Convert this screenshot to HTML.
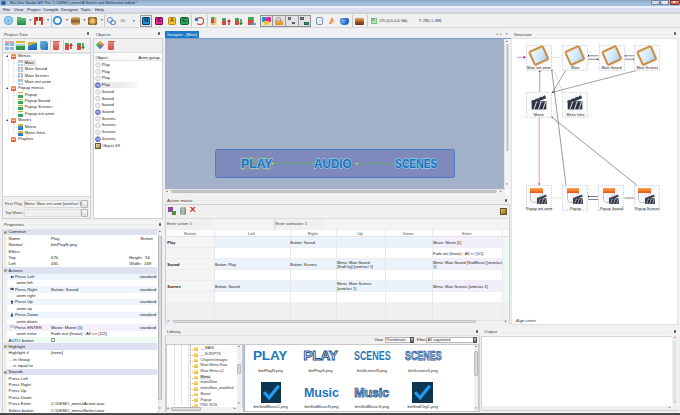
<!DOCTYPE html>
<html><head><meta charset="utf-8">
<style>
*{box-sizing:border-box;margin:0;padding:0}
html,body{width:680px;height:415px;overflow:hidden;background:#eef0f4}
body{position:relative;font-family:"Liberation Sans",sans-serif;font-size:4px;color:#222;line-height:1}
.a{position:absolute}
.t{position:absolute;white-space:nowrap;line-height:1;}
.ptitle{position:absolute;height:8px;background:#f3f3f3}
.ptitle span{position:absolute;left:3px;top:2.5px;font-size:4.4px;color:#3a3a3a}
.ptitle i{position:absolute;top:3.8px;height:1.2px;background:linear-gradient(#e4e4e4,#efefef)}
.pin{position:absolute;width:2px;height:3.2px;top:2.3px;background:#555;border-radius:1px}
.frame{position:absolute;border:0.6px solid #d0d0d0;background:#fff}
.tb{position:absolute;background:#f0f0f0;border-bottom:0.6px solid #dadada}
.ic{position:absolute;width:8.5px;height:8.5px;border-radius:1px}
</style></head><body>

<!-- title bar -->
<div class="a" style="left:0;top:0;width:680px;height:6px;background:linear-gradient(#86a0c0,#98b6d2 25%,#aac5de)"></div>
<div class="a" style="left:0;top:5.8px;width:680px;height:1.9px;background:linear-gradient(#e4eefa,#eef4fc)"></div>
<div class="a" style="left:1px;top:0.6px;width:5px;height:4.8px;border-radius:50%;background:#2f5f9e"></div>
<div class="t" style="left:10px;top:0.9px;font-size:4.3px;color:#263246;transform:scaleX(0.9);transform-origin:0 0">Blu-Disc Studio MX Pro: C:\DEMO_menu\A  Switch and Multiaction.bdmd *</div>
<div class="a" style="left:651.3px;top:0.3px;width:8.6px;height:4.8px;background:linear-gradient(#dfe7f1,#aebfd4);border:0.5px solid #6f84a0;border-radius:0 0 0 1.5px"></div>
<div class="a" style="left:653.8px;top:3px;width:3.6px;height:0.8px;background:#f4f6fa"></div>
<div class="a" style="left:660.3px;top:0.3px;width:9px;height:4.8px;background:linear-gradient(#dfe7f1,#aebfd4);border:0.5px solid #6f84a0"></div>
<div class="a" style="left:662.8px;top:1.3px;width:4px;height:2.6px;border:0.6px solid #f4f6fa;border-top-width:0.9px"></div>
<div class="a" style="left:669.7px;top:0.3px;width:10.3px;height:4.8px;background:linear-gradient(#eba89e,#c9473a);border:0.5px solid #7a2e26;border-radius:0 0 1.5px 0"></div>
<div class="t" style="left:672.8px;top:0.1px;font-size:5px;font-weight:bold;color:#fff">&#215;</div>

<!-- menu bar -->
<div class="a" style="left:0;top:7.7px;width:680px;height:4.6px;background:#dcdff1"></div>
<div class="a" style="left:0;top:12.2px;width:680px;height:1.5px;background:linear-gradient(#d2d8e0,#c9d0d4)"></div>
<div class="t" style="left:3px;top:8.1px;font-size:4.3px;color:#1a1a1a;word-spacing:4px">File</div>
<div class="t" style="left:14px;top:8.1px;font-size:4.3px;color:#1a1a1a">View</div>
<div class="t" style="left:27px;top:8.1px;font-size:4.3px;color:#1a1a1a">Project</div>
<div class="t" style="left:43px;top:8.1px;font-size:4.3px;color:#1a1a1a">Compile</div>
<div class="t" style="left:61px;top:8.1px;font-size:4.3px;color:#1a1a1a">Designer</div>
<div class="t" style="left:80.5px;top:8.1px;font-size:4.3px;color:#1a1a1a">Tools</div>
<div class="t" style="left:95px;top:8.1px;font-size:4.3px;color:#1a1a1a">Help</div>

<!-- toolbar -->
<div class="a" style="left:0;top:13.7px;width:680px;height:14.6px;background:#f0f0f0;border-bottom:0.6px solid #d8d8d8"></div>

<div class="a" style="left:3.8px;top:16.2px;width:8.8px;height:8.8px;border-radius:50%;background:radial-gradient(circle at 50% 50%,#5aa8d8 0,#9fd4ef 30%,#7cc2e6 55%,#3f95cc 80%,#9fd0ea 100%)"></div>
<div class="a" style="left:17px;top:17.5px;width:8.8px;height:7px;background:linear-gradient(#61c07a,#1f8a45);border-radius:0.8px"></div>
<div class="a" style="left:17px;top:16.5px;width:4px;height:1.5px;background:#4fae68;border-radius:0.5px"></div>
<div class="t" style="left:28.8px;top:19px;font-size:3px;color:#333">&#9660;</div>
<div class="a" style="left:34px;top:16.5px;width:9px;height:8.6px;background:linear-gradient(90deg,#c8453a 0,#c8453a 18%,#f6eadb 18%,#f6eadb 82%,#c8453a 82%);border-radius:0.8px"></div>
<div class="a" style="left:36.2px;top:16.5px;width:1.4px;height:4px;background:#b8322a"></div><div class="a" style="left:39.4px;top:16.5px;width:1.4px;height:4px;background:#b8322a"></div>
<div class="t" style="left:46.5px;top:19px;font-size:3px;color:#333">&#9660;</div>
<div class="a" style="left:50.5px;top:15px;width:0.6px;height:12px;background:#c9c9c9"></div>
<div class="a" style="left:53px;top:16.3px;width:9px;height:9px;border-radius:50%;background:radial-gradient(circle,#f4f9fd 0,#f4f9fd 35%,#3f95d8 50%,#2a7fc8 68%,#cfe6f6 100%)"></div>
<div class="t" style="left:65.5px;top:19px;font-size:3px;color:#333">&#9660;</div>
<div class="a" style="left:70.5px;top:17px;width:9.5px;height:7.6px;background:linear-gradient(#e2b96a,#8a5d2b 50%,#d9b070);border-radius:2px"></div>
<div class="t" style="left:83px;top:19px;font-size:3px;color:#333">&#9660;</div>
<div class="a" style="left:88px;top:16.5px;width:9px;height:8.6px;background:radial-gradient(circle,#f0d08a 0,#d8a94f 40%,#7a5a25 75%,#3d8b3a 100%);border-radius:1.5px"></div>
<div class="t" style="left:100.2px;top:19px;font-size:3px;color:#333">&#9660;</div>
<div class="a" style="left:103.6px;top:15px;width:0.6px;height:12px;background:#c9c9c9"></div>
<div class="a" style="left:107px;top:17px;width:5.5px;height:5.5px;border-radius:50%;border:1.2px solid #5b7fc9"></div>
<div class="a" style="left:110px;top:19.5px;width:5.5px;height:5.5px;border-radius:50%;border:1.2px solid #4a6fb8"></div>
<div class="t" style="left:120.5px;top:19px;font-size:4px;color:#555">50</div>
<div class="t" style="left:132.2px;top:19.5px;font-size:3px;color:#333">&#9660;</div>
<div class="a" style="left:139.8px;top:14.8px;width:12.6px;height:12.5px;background:#e6e6e6;border:0.7px solid #9a9a9a"></div>
<div class="a" style="left:142.4px;top:17px;width:8px;height:8px;background:#1d8fd6;border:0.6px solid #0b3f74;border-radius:1px"></div>
<div class="t" style="left:144.3px;top:18.3px;font-size:5.5px;font-weight:bold;color:#0c2f63">N</div>
<div class="a" style="left:155px;top:17px;width:8px;height:8px;background:#e2278a;border:0.6px solid #8a1150;border-radius:1px"></div>
<div class="t" style="left:157.2px;top:18.3px;font-size:5.5px;font-weight:bold;color:#6a0a3c">S</div>
<div class="a" style="left:167.7px;top:17px;width:8.2px;height:8px;background:#f3c632;border:0.6px solid #b38a10;border-radius:1.5px"></div>
<div class="t" style="left:170px;top:18.3px;font-size:5.2px;font-weight:bold;color:#5a4200">A</div>
<div class="a" style="left:180.2px;top:17px;width:8.4px;height:8px;background:#2aa45c;border:0.6px solid #14633a;border-radius:1.5px"></div>
<div class="t" style="left:182.6px;top:18.3px;font-size:5.2px;font-weight:bold;color:#0c4a28">C</div>
<div class="a" style="left:191px;top:15px;width:0.6px;height:12px;background:#c9c9c9"></div>
<div class="a" style="left:195.5px;top:17px;width:8px;height:8px;border-radius:50%;border:1.6px solid #c3352f;border-left-color:transparent;border-bottom-color:#c3352f"></div>
<div class="a" style="left:194.5px;top:17.8px;width:3px;height:3px;background:#2e6fbf;transform:rotate(20deg)"></div>
<div class="a" style="left:207px;top:15px;width:0.6px;height:12px;background:#c9c9c9"></div>
<div class="a" style="left:210.5px;top:16.5px;width:5.5px;height:8.6px;background:linear-gradient(#3fa35a 0,#3fa35a 30%,#d9483f 30%,#d9483f 70%,#e9b23c 70%);border-radius:1px"></div>
<div class="a" style="left:214px;top:16.5px;width:3.3px;height:8.6px;background:#f2d7a0;opacity:.7"></div>
<div class="a" style="left:222.3px;top:17.5px;width:4px;height:7.5px;background:linear-gradient(#3fa35a 0,#3fa35a 40%,#d9483f 40%);border-radius:0.5px"></div>
<svg class="a" style="left:226.8px;top:18.5px" width="4" height="6.5" viewBox="0 0 4 6.5"><path d="M2 0 L4 2.8 L2.7 2.8 L2.7 6.5 L1.3 6.5 L1.3 2.8 L0 2.8 Z" fill="#d0202a"/></svg>
<div class="a" style="left:234.5px;top:17.5px;width:4px;height:7.5px;background:linear-gradient(#3fa35a 0,#3fa35a 40%,#d9483f 40%);border-radius:0.5px"></div>
<svg class="a" style="left:239px;top:18.8px" width="4" height="6.5" viewBox="0 0 4 6.5"><path d="M2 6.5 L4 3.7 L2.7 3.7 L2.7 0 L1.3 0 L1.3 3.7 L0 3.7 Z" fill="#1c8a2e"/></svg>
<div class="a" style="left:248.3px;top:17px;width:4.5px;height:8px;background:linear-gradient(#3fa35a 0,#3fa35a 40%,#d9483f 40%);border-radius:0.5px"></div>
<div class="a" style="left:253px;top:16.5px;width:1.3px;height:8.6px;background:#5aa0d8"></div>
<div class="a" style="left:252px;top:23px;width:4px;height:2px;background:#5aa0d8"></div>
<div class="a" style="left:260px;top:14.8px;width:50.8px;height:12.5px;background:#e2e2e2;border:0.7px solid #8f8f8f"></div>
<div class="a" style="left:272.4px;top:15px;width:0.6px;height:12px;background:#9a9a9a"></div>
<div class="a" style="left:285px;top:15px;width:0.6px;height:12px;background:#9a9a9a"></div>
<div class="a" style="left:297.6px;top:15px;width:0.6px;height:12px;background:#9a9a9a"></div>
<div class="a" style="left:261.8px;top:17px;width:4.5px;height:4.5px;background:#1d8fd6;border-radius:1px"></div>
<div class="a" style="left:266.3px;top:17px;width:4.5px;height:4.5px;background:#e2278a;border-radius:1px"></div>
<div class="a" style="left:263.8px;top:21px;width:5px;height:4px;background:#f3c632;border-radius:1px"></div>
<div class="a" style="left:275px;top:19.8px;width:7.5px;height:5.5px;background:linear-gradient(#f6b44c,#e08a1e);border-radius:1px"></div>
<div class="a" style="left:276.3px;top:16.5px;width:5px;height:5px;border:1px solid #9aa0a0;border-bottom:none;border-radius:2.5px 2.5px 0 0"></div>
<div class="a" style="left:287.5px;top:17px;width:3.5px;height:2.5px;background:#8aa;border:0.4px solid #566"></div>
<div class="a" style="left:291.5px;top:21.5px;width:3.5px;height:2.5px;background:#b98aa8;border:0.4px solid #656"></div>
<div class="a" style="left:300px;top:17px;width:3.5px;height:2.5px;background:#889;border:0.4px solid #556"></div>
<div class="a" style="left:304px;top:21.5px;width:4.5px;height:3px;background:#2f9a3f;border:0.4px solid #265"></div>
<div class="a" style="left:315.5px;top:17px;width:7.5px;height:8px;border:0.8px solid #6e96cf;border-radius:2px;background:linear-gradient(135deg,transparent 45%,#d9534f 50%,transparent 55%)"></div>
<div class="a" style="left:328.8px;top:17px;width:0;height:0;border-left:3.8px solid transparent;border-right:3.8px solid transparent;border-bottom:7.5px solid #f08a3c"></div>
<div class="a" style="left:330.6px;top:20.5px;width:0;height:0;border-left:2px solid transparent;border-right:2px solid transparent;border-bottom:3.2px solid #f4f4f4"></div>
<div class="a" style="left:340px;top:17.5px;width:8.6px;height:7px;background:radial-gradient(circle at 30% 40%,#7cb6ef 0,#1f66c8 60%);border-radius:2px 2px 4px 4px"></div>
<div class="a" style="left:351.5px;top:15px;width:0.6px;height:12px;background:#c9c9c9"></div>
<div class="a" style="left:354.5px;top:17.5px;width:9px;height:7.5px;background:linear-gradient(#e6a85e,#9b4f22 60%,#6b3416);border-radius:1px"></div>
<div class="a" style="left:366.8px;top:15px;width:0.6px;height:12px;background:#c9c9c9"></div>
<div class="a" style="left:370.6px;top:18.3px;width:6px;height:6px;background:#b7eab5;border:0.5px solid #7cc47a"></div>
<div class="t" style="left:372.1px;top:19.8px;font-size:2.6px;color:#2d6a2d">BL</div>
<div class="t" style="left:379.6px;top:19.3px;font-size:3.9px;color:#222">2% (0,5-0,5 Gb)</div>
<div class="t" style="left:418.8px;top:19.3px;font-size:3.9px;color:#222">T: 290, L:396</div>


<!-- main background between panels -->

<!-- ===== Project tree panel ===== -->
<div class="ptitle" style="left:1px;top:30px;width:90px"><span>Project Tree</span><i style="left:31px;width:52px"></i><b class="pin" style="left:85.8px"></b></div>
<div class="frame" style="left:2px;top:38px;width:88.8px;height:181px;background:#f0f0f0"></div>
<div class="a" style="left:2.6px;top:52.25px;width:87.6px;height:0.6px;background:#dcdcdc"></div>
<div class="a" style="left:3px;top:52.85px;width:87px;height:144.6px;background:#fff;border-top:0.5px solid #e3e3e3;border-bottom:0.5px solid #d6d6d6"></div>

<div class="a" style="left:5px;top:41.00px;width:8.6px;height:8.7px;background:linear-gradient(#e8a8a0 0,#e8a8a0 20%,#f5f5f5 20%,#f5f5f5 26%,#86b8e6 26%,#86b8e6 58%,#f5f5f5 58%,#f5f5f5 64%,#86b8e6 64%);border-radius:0.5px"></div>
<div class="a" style="left:8.9px;top:43.00px;width:0.8px;height:6.7px;background:#f5f5f5"></div>
<div class="a" style="left:16.3px;top:41.00px;width:8.6px;height:8.7px;background:linear-gradient(#d9b440 0,#d9b440 25%,#f0f0e0 25%,#f0f0e0 35%,#9fd8c8 35%,#9fd8c8 60%,#2c9a4a 60%);border-radius:0.5px"></div>
<div class="a" style="left:28px;top:42.00px;width:8.6px;height:7.6px;background:linear-gradient(160deg,#c9b040 0,#c9b040 35%,#2f7fd0 38%,#1f5fb0);border-radius:0.5px"></div>
<div class="a" style="left:39.8px;top:41.00px;width:8.2px;height:8.8px;background:linear-gradient(135deg,#6fb6e4,#1f6fb0);border-radius:1px 3px 1px 3px"></div>
<div class="a" style="left:50.3px;top:40.00px;width:0.6px;height:11px;background:#d0d0d0"></div>
<div class="a" style="left:53.3px;top:42.30px;width:6px;height:7.4px;background:linear-gradient(#e58a82,#d04a3f);border-radius:0 0 1.5px 1.5px"></div>
<div class="a" style="left:52.8px;top:41.30px;width:7px;height:1.2px;background:#d55a50;border-radius:0.5px"></div>
<div class="a" style="left:62.8px;top:40.00px;width:0.6px;height:11px;background:#d0d0d0"></div>
<div class="a" style="left:65px;top:42.50px;width:4px;height:7.2px;background:linear-gradient(#3fa35a 0,#3fa35a 35%,#d9483f 35%);border-radius:0.5px"></div>
<svg class="a" style="left:69.3px;top:42.8px" width="4" height="6.5" viewBox="0 0 4 6.5"><path d="M2 0 L4 2.8 L2.7 2.8 L2.7 6.5 L1.3 6.5 L1.3 2.8 L0 2.8 Z" fill="#d0202a"/></svg>
<div class="a" style="left:76.5px;top:42.50px;width:4px;height:7.2px;background:linear-gradient(#3fa35a 0,#3fa35a 35%,#d9483f 35%);border-radius:0.5px"></div>
<svg class="a" style="left:80.8px;top:43.2px" width="4" height="6.5" viewBox="0 0 4 6.5"><path d="M2 6.5 L4 3.7 L2.7 3.7 L2.7 0 L1.3 0 L1.3 3.7 L0 3.7 Z" fill="#1c8a2e"/></svg>
<div class="a" style="left:13.3px;top:59.25px;width:0;height:22.5px;border-left:0.5px dotted #dedede"></div>
<div class="a" style="left:13.3px;top:91.25px;width:0;height:22.5px;border-left:0.5px dotted #dedede"></div>
<div class="a" style="left:13.3px;top:123.25px;width:0;height:9.5px;border-left:0.5px dotted #dedede"></div>
<div class="a" style="left:7.5px;top:59.25px;width:0;height:80px;border-left:0.5px dotted #e4e4e4"></div>
<div class="a" style="left:5.8px;top:55.25px;width:0;height:0;border-left:2.6px solid transparent;border-bottom:2.6px solid #3a3a3a"></div>
<div class="a" style="left:11px;top:54.45px;width:5.3px;height:4.4px;background:linear-gradient(#f29a6a,#df5a2a);border-radius:0.7px"></div>
<div class="a" style="left:12px;top:56.05px;width:3.3px;height:0.8px;background:#fbd2b8"></div>
<div class="t" style="left:18px;top:54.45px;font-size:4.2px;color:#262626">Menus</div>
<div class="a" style="left:13.6px;top:63.03px;width:3.8px;height:0;border-top:0.5px dotted #dedede"></div>
<div class="a" style="left:17.7px;top:60.33px;width:5.6px;height:5.4px;background:linear-gradient(#f0a6a0 0,#f0a6a0 18%,#fff 18%,#fff 24%,#9cc8ec 24%,#9cc8ec 55%,#fff 55%,#fff 62%,#9cc8ec 62%)"></div>
<div class="a" style="left:20.2px;top:61.53px;width:0.6px;height:4.2px;background:#fff"></div>
<div class="a" style="left:24px;top:60.15px;width:11.5px;height:5.8px;background:#ececec;border:0.4px solid #dcdcdc"></div><div class="t" style="left:24.8px;top:60.83px;font-size:4.2px;color:#111;font-weight:normal">Main</div>
<div class="a" style="left:13.6px;top:69.41px;width:3.8px;height:0;border-top:0.5px dotted #dedede"></div>
<div class="a" style="left:17.7px;top:66.71px;width:5.6px;height:5.4px;background:linear-gradient(#f0a6a0 0,#f0a6a0 18%,#fff 18%,#fff 24%,#9cc8ec 24%,#9cc8ec 55%,#fff 55%,#fff 62%,#9cc8ec 62%)"></div>
<div class="a" style="left:20.2px;top:67.91px;width:0.6px;height:4.2px;background:#fff"></div>
<div class="t" style="left:24.8px;top:67.21px;font-size:4.2px;color:#262626;font-weight:normal">Main Sound</div>
<div class="a" style="left:13.6px;top:75.79px;width:3.8px;height:0;border-top:0.5px dotted #dedede"></div>
<div class="a" style="left:17.7px;top:73.09px;width:5.6px;height:5.4px;background:linear-gradient(#f0a6a0 0,#f0a6a0 18%,#fff 18%,#fff 24%,#9cc8ec 24%,#9cc8ec 55%,#fff 55%,#fff 62%,#9cc8ec 62%)"></div>
<div class="a" style="left:20.2px;top:74.29px;width:0.6px;height:4.2px;background:#fff"></div>
<div class="t" style="left:24.8px;top:73.59px;font-size:4.2px;color:#262626;font-weight:normal">Main Scenes</div>
<div class="a" style="left:13.6px;top:82.17px;width:3.8px;height:0;border-top:0.5px dotted #dedede"></div>
<div class="a" style="left:17.7px;top:79.47px;width:5.6px;height:5.4px;background:linear-gradient(#f0a6a0 0,#f0a6a0 18%,#fff 18%,#fff 24%,#9cc8ec 24%,#9cc8ec 55%,#fff 55%,#fff 62%,#9cc8ec 62%)"></div>
<div class="a" style="left:20.2px;top:80.67px;width:0.6px;height:4.2px;background:#fff"></div>
<div class="t" style="left:24.8px;top:79.97px;font-size:4.2px;color:#262626;font-weight:normal">Main ent anim</div>
<div class="a" style="left:5.8px;top:87.15px;width:0;height:0;border-left:2.6px solid transparent;border-bottom:2.6px solid #3a3a3a"></div>
<div class="a" style="left:11px;top:86.35px;width:5.3px;height:4.4px;background:linear-gradient(#f29a6a,#df5a2a);border-radius:0.7px"></div>
<div class="a" style="left:12px;top:87.95px;width:3.3px;height:0.8px;background:#fbd2b8"></div>
<div class="t" style="left:18px;top:86.35px;font-size:4.2px;color:#262626">Popup menus</div>
<div class="a" style="left:13.6px;top:94.93px;width:3.8px;height:0;border-top:0.5px dotted #dedede"></div>
<div class="a" style="left:17.7px;top:92.23px;width:5.6px;height:5.4px;background:linear-gradient(#cdb23a 0,#cdb23a 20%,#eef6ee 20%,#eef6ee 45%,#33a860 45%);border-radius:0.5px"></div>
<div class="t" style="left:24.8px;top:92.73px;font-size:4.2px;color:#262626;font-weight:normal">Popup</div>
<div class="a" style="left:13.6px;top:101.31px;width:3.8px;height:0;border-top:0.5px dotted #dedede"></div>
<div class="a" style="left:17.7px;top:98.61px;width:5.6px;height:5.4px;background:linear-gradient(#cdb23a 0,#cdb23a 20%,#eef6ee 20%,#eef6ee 45%,#33a860 45%);border-radius:0.5px"></div>
<div class="t" style="left:24.8px;top:99.11px;font-size:4.2px;color:#262626;font-weight:normal">Popup Sound</div>
<div class="a" style="left:13.6px;top:107.69px;width:3.8px;height:0;border-top:0.5px dotted #dedede"></div>
<div class="a" style="left:17.7px;top:104.99px;width:5.6px;height:5.4px;background:linear-gradient(#cdb23a 0,#cdb23a 20%,#eef6ee 20%,#eef6ee 45%,#33a860 45%);border-radius:0.5px"></div>
<div class="t" style="left:24.8px;top:105.49px;font-size:4.2px;color:#262626;font-weight:normal">Popup Scenes</div>
<div class="a" style="left:13.6px;top:114.07px;width:3.8px;height:0;border-top:0.5px dotted #dedede"></div>
<div class="a" style="left:17.7px;top:111.37px;width:5.6px;height:5.4px;background:linear-gradient(#cdb23a 0,#cdb23a 20%,#eef6ee 20%,#eef6ee 45%,#33a860 45%);border-radius:0.5px"></div>
<div class="t" style="left:24.8px;top:111.87px;font-size:4.2px;color:#262626;font-weight:normal">Popup ent anim</div>
<div class="a" style="left:5.8px;top:119.05px;width:0;height:0;border-left:2.6px solid transparent;border-bottom:2.6px solid #3a3a3a"></div>
<div class="a" style="left:11px;top:118.25px;width:5.3px;height:4.4px;background:linear-gradient(#f29a6a,#df5a2a);border-radius:0.7px"></div>
<div class="a" style="left:12px;top:119.85px;width:3.3px;height:0.8px;background:#fbd2b8"></div>
<div class="t" style="left:18px;top:118.25px;font-size:4.2px;color:#262626">Movies</div>
<div class="a" style="left:13.6px;top:126.83px;width:3.8px;height:0;border-top:0.5px dotted #dedede"></div>
<div class="a" style="left:17.7px;top:124.13px;width:5.6px;height:5.4px;background:linear-gradient(#d6b640 0,#d6b640 30%,#3e8fd8 30%,#2a6fb8);border-radius:0.5px"></div>
<div class="t" style="left:24.8px;top:124.63px;font-size:4.2px;color:#262626;font-weight:normal">Movie</div>
<div class="a" style="left:13.6px;top:133.21px;width:3.8px;height:0;border-top:0.5px dotted #dedede"></div>
<div class="a" style="left:17.7px;top:130.51px;width:5.6px;height:5.4px;background:linear-gradient(#d6b640 0,#d6b640 30%,#3e8fd8 30%,#2a6fb8);border-radius:0.5px"></div>
<div class="t" style="left:24.8px;top:131.01px;font-size:4.2px;color:#262626;font-weight:normal">Menu Intro</div>
<div class="a" style="left:11px;top:137.39px;width:5.3px;height:4.4px;background:linear-gradient(#f29a6a,#df5a2a);border-radius:0.7px"></div>
<div class="a" style="left:12px;top:138.99px;width:3.3px;height:0.8px;background:#fbd2b8"></div>
<div class="t" style="left:18px;top:137.39px;font-size:4.2px;color:#262626">Playlists</div>
<div class="t" style="left:5px;top:202.00px;font-size:4px;color:#444">First Play:</div>
<div class="a" style="left:23.5px;top:200.00px;width:57.5px;height:7.5px;background:#f4f4f4;border:0.5px solid #dadada"></div>
<div class="t" style="left:24.5px;top:202.00px;font-size:4px;color:#333">Menu: Main ent anim [anm/act 1]</div>
<div class="a" style="left:81.3px;top:200.00px;width:7.2px;height:7.7px;background:linear-gradient(#f8f8f8,#e4e4e4);border:0.5px solid #b4b4b4;border-radius:1px"></div>
<div class="t" style="left:83.3px;top:203.50px;font-size:3px;color:#333">...</div>
<div class="t" style="left:5px;top:211.00px;font-size:4px;color:#444">Top Menu:</div>
<div class="a" style="left:23.5px;top:209.00px;width:57.5px;height:7.5px;background:#f0f0f0;border:0.5px solid #dedede"></div>
<div class="a" style="left:81.3px;top:209.00px;width:7.2px;height:7.7px;background:linear-gradient(#f8f8f8,#e4e4e4);border:0.5px solid #b4b4b4;border-radius:1px"></div>
<div class="t" style="left:83.3px;top:212.50px;font-size:3px;color:#333">...</div>

<!-- ===== Objects panel ===== -->
<div class="ptitle" style="left:92px;top:30px;width:71px"><span style="left:3.7px">Objects</span><i style="left:21px;width:45px"></i><b class="pin" style="left:158.4px;margin-left:-92px"></b></div>
<div class="frame" style="left:93px;top:38px;width:70px;height:181px;background:#f0f0f0"></div>
<div class="a" style="left:93.6px;top:52px;width:68.8px;height:0.6px;background:#dcdcdc"></div>
<div class="a" style="left:93.6px;top:52.6px;width:68.8px;height:165.9px;background:#fff"></div>

<div class="a" style="left:97.2px;top:42.2px;width:6.2px;height:6.2px;background:conic-gradient(#e8703a 0 25%,#3f7fd0 0 50%,#4aa84a 0 75%,#d9a040 0);transform:rotate(45deg);border-radius:0.8px"></div>
<div class="a" style="left:108.3px;top:42.3px;width:6px;height:7.4px;background:linear-gradient(#e58a82,#d04a3f);border-radius:0 0 1.5px 1.5px"></div>
<div class="a" style="left:107.8px;top:41.3px;width:7px;height:1.2px;background:#d55a50;border-radius:0.5px"></div>
<div class="a" style="left:93.6px;top:52.6px;width:68.8px;height:8.6px;background:linear-gradient(#fff,#f7f7f7);border-bottom:0.5px solid #e2e2e2"></div>
<div class="t" style="left:95.5px;top:56.1px;font-size:4.2px;color:#222">Object</div>
<div class="t" style="left:138.2px;top:56.1px;font-size:4.2px;color:#222">Anim group</div>
<div class="a" style="left:93.6px;top:81.8px;width:44px;height:6px;background:linear-gradient(90deg,#e4e4e4,#eeeeee 70%,#fafafa)"></div>
<svg class="a" style="left:0;top:0" width="680" height="415" viewBox="0 0 680 415">
<circle cx="97.9" cy="65.00" r="2.4" fill="#f6f6f6" stroke="#a4a4a4" stroke-width="0.5"/>
<circle cx="97.9" cy="65.00" r="1.2" fill="none" stroke="#cfcfcf" stroke-width="0.4"/>
<circle cx="97.9" cy="71.74" r="2.4" fill="#f6f6f6" stroke="#a4a4a4" stroke-width="0.5"/>
<circle cx="97.9" cy="71.74" r="1.2" fill="none" stroke="#cfcfcf" stroke-width="0.4"/>
<circle cx="97.9" cy="78.48" r="2.4" fill="#f6f6f6" stroke="#a4a4a4" stroke-width="0.5"/>
<circle cx="97.9" cy="78.48" r="1.2" fill="none" stroke="#cfcfcf" stroke-width="0.4"/>
<circle cx="97.9" cy="85.22" r="2.5" fill="#5b67d0" stroke="#3c48a8" stroke-width="0.4"/>
<path d="M96.8 86.52 L97.1 83.92 L99.0 86.52 L99.0 83.92" stroke="#fff" stroke-width="0.55" fill="none"/>
<circle cx="97.9" cy="91.96" r="2.4" fill="#f6f6f6" stroke="#a4a4a4" stroke-width="0.5"/>
<circle cx="97.9" cy="91.96" r="1.2" fill="none" stroke="#cfcfcf" stroke-width="0.4"/>
<circle cx="97.9" cy="98.70" r="2.4" fill="#f6f6f6" stroke="#a4a4a4" stroke-width="0.5"/>
<circle cx="97.9" cy="98.70" r="1.2" fill="none" stroke="#cfcfcf" stroke-width="0.4"/>
<circle cx="97.9" cy="105.44" r="2.4" fill="#f6f6f6" stroke="#a4a4a4" stroke-width="0.5"/>
<circle cx="97.9" cy="105.44" r="1.2" fill="none" stroke="#cfcfcf" stroke-width="0.4"/>
<circle cx="97.9" cy="112.18" r="2.5" fill="#5b67d0" stroke="#3c48a8" stroke-width="0.4"/>
<path d="M96.8 113.48 L97.1 110.88 L99.0 113.48 L99.0 110.88" stroke="#fff" stroke-width="0.55" fill="none"/>
<circle cx="97.9" cy="118.92" r="2.4" fill="#f6f6f6" stroke="#a4a4a4" stroke-width="0.5"/>
<circle cx="97.9" cy="118.92" r="1.2" fill="none" stroke="#cfcfcf" stroke-width="0.4"/>
<circle cx="97.9" cy="125.66" r="2.4" fill="#f6f6f6" stroke="#a4a4a4" stroke-width="0.5"/>
<circle cx="97.9" cy="125.66" r="1.2" fill="none" stroke="#cfcfcf" stroke-width="0.4"/>
<circle cx="97.9" cy="132.40" r="2.4" fill="#f6f6f6" stroke="#a4a4a4" stroke-width="0.5"/>
<circle cx="97.9" cy="132.40" r="1.2" fill="none" stroke="#cfcfcf" stroke-width="0.4"/>
<circle cx="97.9" cy="139.14" r="2.5" fill="#5b67d0" stroke="#3c48a8" stroke-width="0.4"/>
<path d="M96.8 140.44 L97.1 137.84 L99.0 140.44 L99.0 137.84" stroke="#fff" stroke-width="0.55" fill="none"/>
</svg>
<div class="t" style="left:101.7px;top:62.80px;font-size:4.2px;color:#262626">Play</div>
<div class="t" style="left:101.7px;top:69.54px;font-size:4.2px;color:#262626">Play</div>
<div class="t" style="left:101.7px;top:76.28px;font-size:4.2px;color:#262626">Play</div>
<div class="t" style="left:101.7px;top:83.02px;font-size:4.2px;color:#262626">Play</div>
<div class="t" style="left:101.7px;top:89.76px;font-size:4.2px;color:#262626">Sound</div>
<div class="t" style="left:101.7px;top:96.50px;font-size:4.2px;color:#262626">Sound</div>
<div class="t" style="left:101.7px;top:103.24px;font-size:4.2px;color:#262626">Sound</div>
<div class="t" style="left:101.7px;top:109.98px;font-size:4.2px;color:#262626">Sound</div>
<div class="t" style="left:101.7px;top:116.72px;font-size:4.2px;color:#262626">Scenes</div>
<div class="t" style="left:101.7px;top:123.46px;font-size:4.2px;color:#262626">Scenes</div>
<div class="t" style="left:101.7px;top:130.20px;font-size:4.2px;color:#262626">Scenes</div>
<div class="t" style="left:101.7px;top:136.94px;font-size:4.2px;color:#262626">Scenes</div>
<div class="a" style="left:95.4px;top:143.18px;width:5.4px;height:5.4px;background:linear-gradient(135deg,#efe2b0,#9a8444);border:0.4px solid #6a5a2a"></div>
<div class="t" style="left:101.8px;top:143.68px;font-size:4.2px;color:#262626">Object 49</div>

<!-- ===== Properties panel ===== -->
<div class="ptitle" style="left:1px;top:220.5px;width:162px"><span>Properties</span><i style="left:27px;width:128px"></i><b class="pin" style="left:157.6px"></b></div>
<div class="frame" style="left:2px;top:228.5px;width:160.8px;height:183.5px"></div>
<div class="a" style="left:2.6px;top:229px;width:4.6px;height:183px;background:#f0f0f0"></div>
<div class="a" style="left:7.2px;top:229.00px;width:150.3px;height:6.36px;background:#dde1f1"></div>
<div class="a" style="left:2.6px;top:229.00px;width:4.6px;height:6.36px;background:#e4e6f0"></div>
<div class="a" style="left:3.6px;top:230.58px;width:3px;height:3px;border:0.4px solid #b4b4b4;background:#f4f4f4"></div>
<div class="a" style="left:4.3px;top:231.98px;width:1.6px;height:0.4px;background:#888"></div>
<div class="t" style="left:8.6px;top:230.48px;font-size:4.3px;color:#222">Common</div>
<div class="a" style="left:7.2px;top:235.36px;width:150.3px;height:6.36px;background:#fff"></div>
<div class="t" style="left:8.6px;top:236.84px;font-size:4.3px;color:#222">Name</div>
<div class="t" style="left:51px;top:236.84px;font-size:4.3px;color:#222">Play</div>
<div class="t" style="left:140.5px;top:236.84px;font-size:4.3px;color:#222">Button</div>
<div class="a" style="left:7.2px;top:241.72px;width:150.3px;height:6.36px;background:#fff"></div>
<div class="t" style="left:8.6px;top:243.20px;font-size:4.3px;color:#222">Normal</div>
<div class="t" style="left:51px;top:243.20px;font-size:4.3px;color:#222">btnPlayN.png</div>
<div class="a" style="left:7.2px;top:248.08px;width:150.3px;height:6.36px;background:#fff"></div>
<div class="t" style="left:8.6px;top:249.56px;font-size:4.3px;color:#222">Effect</div>
<div class="a" style="left:7.2px;top:254.44px;width:150.3px;height:6.36px;background:#fff"></div>
<div class="t" style="left:8.6px;top:255.92px;font-size:4.3px;color:#222">Top</div>
<div class="t" style="left:51px;top:255.92px;font-size:4.3px;color:#222">670</div>
<div class="t" style="left:129px;top:255.92px;font-size:4.3px;color:#222">Height:&nbsp; 56</div>
<div class="a" style="left:7.2px;top:260.80px;width:150.3px;height:6.36px;background:#fff"></div>
<div class="t" style="left:8.6px;top:262.28px;font-size:4.3px;color:#222">Left</div>
<div class="t" style="left:51px;top:262.28px;font-size:4.3px;color:#222">431</div>
<div class="t" style="left:129.5px;top:262.28px;font-size:4.3px;color:#222">Width:&nbsp; 169</div>
<div class="a" style="left:7.2px;top:267.16px;width:150.3px;height:6.36px;background:#dde1f1"></div>
<div class="a" style="left:2.6px;top:267.16px;width:4.6px;height:6.36px;background:#e4e6f0"></div>
<div class="a" style="left:3.6px;top:268.74px;width:3px;height:3px;border:0.4px solid #b4b4b4;background:#f4f4f4"></div>
<div class="a" style="left:4.3px;top:270.14px;width:1.6px;height:0.4px;background:#888"></div>
<div class="t" style="left:8.6px;top:268.64px;font-size:4.3px;color:#222">Actions</div>
<div class="a" style="left:7.2px;top:273.52px;width:150.3px;height:6.36px;background:#eef5fc"></div>
<svg class="a" style="left:9.6px;top:274.50px" width="4" height="4" viewBox="0 0 4 4"><path d="M0.5 2 L2.2 0.4 L2.2 1.4 L4 1.4 L4 2.6 L2.2 2.6 L2.2 3.6 Z" fill="#1f2f58"/></svg>
<div class="t" style="left:15px;top:275.00px;font-size:4.3px;color:#222">Press Left</div>
<div class="t" style="left:139.5px;top:275.00px;font-size:4.3px;color:#222">standard</div>
<div class="a" style="left:7.2px;top:279.88px;width:150.3px;height:6.36px;background:#fff"></div>
<div class="t" style="left:16.5px;top:281.36px;font-size:4.3px;color:#222">anim left</div>
<div class="a" style="left:7.2px;top:286.24px;width:150.3px;height:6.36px;background:#eef5fc"></div>
<svg class="a" style="left:9.6px;top:287.22px" width="4" height="4" viewBox="0 0 4 4"><path d="M0.3 1.2 L2.6 1.2 L2.6 0.3 L4 2 L2.6 3.7 L2.6 2.8 L0.3 2.8 Z" fill="#1f2f58"/></svg>
<div class="t" style="left:15px;top:287.72px;font-size:4.3px;color:#222">Press Right</div>
<div class="t" style="left:51px;top:287.72px;font-size:4.3px;color:#222">Button: Sound</div>
<div class="t" style="left:139.5px;top:287.72px;font-size:4.3px;color:#222">standard</div>
<div class="a" style="left:7.2px;top:292.60px;width:150.3px;height:6.36px;background:#fff"></div>
<div class="t" style="left:16.5px;top:294.08px;font-size:4.3px;color:#222">anim right</div>
<div class="a" style="left:7.2px;top:298.96px;width:150.3px;height:6.36px;background:#eef5fc"></div>
<svg class="a" style="left:9.6px;top:299.94px" width="4" height="4" viewBox="0 0 4 4"><path d="M2 0.2 L3.6 2 L2.6 2 L2.6 4 L1.4 4 L1.4 2 L0.4 2 Z" fill="#1f2f58"/></svg>
<div class="t" style="left:15px;top:300.44px;font-size:4.3px;color:#222">Press Up</div>
<div class="t" style="left:139.5px;top:300.44px;font-size:4.3px;color:#222">standard</div>
<div class="a" style="left:7.2px;top:305.32px;width:150.3px;height:6.36px;background:#fff"></div>
<div class="t" style="left:16.5px;top:306.80px;font-size:4.3px;color:#222">anim up</div>
<div class="a" style="left:7.2px;top:311.68px;width:150.3px;height:6.36px;background:#eef5fc"></div>
<svg class="a" style="left:9.6px;top:312.66px" width="4" height="4" viewBox="0 0 4 4"><path d="M2 4 L3.6 2.2 L2.6 2.2 L2.6 0.2 L1.4 0.2 L1.4 2.2 L0.4 2.2 Z" fill="#1f2f58"/></svg>
<div class="t" style="left:15px;top:313.16px;font-size:4.3px;color:#222">Press Down</div>
<div class="t" style="left:139.5px;top:313.16px;font-size:4.3px;color:#222">standard</div>
<div class="a" style="left:7.2px;top:318.04px;width:150.3px;height:6.36px;background:#fff"></div>
<div class="t" style="left:16.5px;top:319.52px;font-size:4.3px;color:#222">anim down</div>
<div class="a" style="left:7.2px;top:324.40px;width:150.3px;height:6.36px;background:#f5eefb"></div>
<div class="t" style="left:9.6px;top:326.28px;font-size:3.3px;color:#5a6a9a">OK</div>
<div class="t" style="left:15px;top:325.88px;font-size:4.3px;color:#222">Press ENTER</div>
<div class="t" style="left:51px;top:325.88px;font-size:4.3px;color:#222">Movie: Movie [1]</div>
<div class="t" style="left:139.5px;top:325.88px;font-size:4.3px;color:#222">standard</div>
<div class="a" style="left:7.2px;top:330.76px;width:150.3px;height:6.36px;background:#fff"></div>
<div class="t" style="left:16.5px;top:332.24px;font-size:4.3px;color:#222">anim enter</div>
<div class="t" style="left:51px;top:332.24px;font-size:4.3px;color:#222">Fade out (linear) - All &lt;&gt; [1/2]</div>
<div class="a" style="left:7.2px;top:337.12px;width:150.3px;height:6.36px;background:#eefbf4"></div>
<div class="t" style="left:8.6px;top:338.60px;font-size:4.3px;color:#222">AUTO button</div>
<div class="a" style="left:51.2px;top:338.30px;width:4px;height:4px;border:0.5px solid #9a9a9a;background:linear-gradient(#eaeaea,#fafafa)"></div>
<div class="a" style="left:7.2px;top:343.48px;width:150.3px;height:6.36px;background:#dde1f1"></div>
<div class="a" style="left:2.6px;top:343.48px;width:4.6px;height:6.36px;background:#e4e6f0"></div>
<div class="a" style="left:3.6px;top:345.06px;width:3px;height:3px;border:0.4px solid #b4b4b4;background:#f4f4f4"></div>
<div class="a" style="left:4.3px;top:346.46px;width:1.6px;height:0.4px;background:#888"></div>
<div class="t" style="left:8.6px;top:344.96px;font-size:4.3px;color:#222">Highlight</div>
<div class="a" style="left:7.2px;top:349.84px;width:150.3px;height:6.36px;background:#fff"></div>
<div class="t" style="left:8.6px;top:351.32px;font-size:4.3px;color:#222">Highlight if</div>
<div class="t" style="left:51px;top:351.32px;font-size:4.3px;color:#222">[none]</div>
<div class="a" style="left:7.2px;top:356.20px;width:150.3px;height:6.36px;background:#fff"></div>
<div class="t" style="left:8.6px;top:357.68px;font-size:4.3px;color:#222">... in Group</div>
<div class="a" style="left:7.2px;top:362.56px;width:150.3px;height:6.36px;background:#fff"></div>
<div class="t" style="left:8.6px;top:364.04px;font-size:4.3px;color:#222">... is equal to</div>
<div class="a" style="left:7.2px;top:368.92px;width:150.3px;height:6.36px;background:#dde1f1"></div>
<div class="a" style="left:2.6px;top:368.92px;width:4.6px;height:6.36px;background:#e4e6f0"></div>
<div class="a" style="left:3.6px;top:370.50px;width:3px;height:3px;border:0.4px solid #b4b4b4;background:#f4f4f4"></div>
<div class="a" style="left:4.3px;top:371.90px;width:1.6px;height:0.4px;background:#888"></div>
<div class="t" style="left:8.6px;top:370.40px;font-size:4.3px;color:#222">Sounds</div>
<div class="a" style="left:7.2px;top:375.28px;width:150.3px;height:6.36px;background:#fff"></div>
<div class="t" style="left:8.6px;top:376.76px;font-size:4.3px;color:#222">Press Left</div>
<div class="a" style="left:7.2px;top:381.64px;width:150.3px;height:6.36px;background:#fff"></div>
<div class="t" style="left:8.6px;top:383.12px;font-size:4.3px;color:#222">Press Right</div>
<div class="a" style="left:7.2px;top:388.00px;width:150.3px;height:6.36px;background:#fff"></div>
<div class="t" style="left:8.6px;top:389.48px;font-size:4.3px;color:#222">Press Up</div>
<div class="a" style="left:7.2px;top:394.36px;width:150.3px;height:6.36px;background:#fff"></div>
<div class="t" style="left:8.6px;top:395.84px;font-size:4.3px;color:#222">Press Down</div>
<div class="a" style="left:7.2px;top:400.72px;width:150.3px;height:6.36px;background:#fff"></div>
<div class="t" style="left:8.6px;top:402.20px;font-size:4.3px;color:#222">Press Enter</div>
<div class="t" style="left:51px;top:402.20px;font-size:4.3px;color:#222">C:\DEMO_menu\Action.wav</div>
<div class="a" style="left:7.2px;top:407.08px;width:150.3px;height:6.36px;background:#fff"></div>
<div class="t" style="left:8.6px;top:408.56px;font-size:4.3px;color:#222">Select button</div>
<div class="t" style="left:51px;top:408.56px;font-size:4.3px;color:#222">C:\DEMO_menu\Select.wav</div>

<div class="a" style="left:157.5px;top:229px;width:5px;height:183px;background:#f0f0f0;border-left:0.4px solid #e2e2e2"></div>
<div class="a" style="left:158.1px;top:235.5px;width:3.8px;height:164px;background:linear-gradient(90deg,#e6e6e6,#d2d2d2,#e6e6e6);border:0.4px solid #b8b8b8;border-radius:1px"></div>
<div class="t" style="left:158.6px;top:230.20px;font-size:3px;color:#444">&#9652;</div>
<div class="t" style="left:158.6px;top:407.10px;font-size:3px;color:#444">&#9662;</div>

<!-- ===== Designer ===== -->
<div class="a" style="left:165px;top:31px;width:33.8px;height:6.8px;background:#1b78c9"></div>
<div class="t" style="left:167.2px;top:33.1px;font-size:3.9px;color:#f4f8fc">Designer - [Main]</div>
<div class="t" style="left:495.6px;top:32.6px;font-size:3.3px;color:#555">&#9666;</div><div class="t" style="left:500.3px;top:32.6px;font-size:3.3px;color:#555">&#9656;</div><div class="t" style="left:505.4px;top:32.3px;font-size:4px;color:#444">&#215;</div>
<div class="a" style="left:164.5px;top:37.5px;width:346px;height:1.3px;background:linear-gradient(#6f9ad0,#8fa3c2)"></div>
<div class="a" style="left:165px;top:38.5px;width:339px;height:150.1px;background:#a3b1c8"></div>
<div class="a" style="left:504px;top:38.5px;width:6.3px;height:150.1px;background:#f3f3f3;border-left:0.5px solid #e6e6e6"></div>
<div class="a" style="left:505.6px;top:44.3px;width:3.8px;height:107px;background:linear-gradient(90deg,#dcdcdc,#c8c8c8,#dcdcdc);border-radius:1px"></div>
<div class="t" style="left:505.6px;top:39.5px;font-size:3px;color:#444">&#9652;</div>
<div class="t" style="left:505.6px;top:182.5px;font-size:3px;color:#444">&#9662;</div>
<div class="a" style="left:165px;top:188.6px;width:339.5px;height:6.2px;background:#f0f0f0;border-top:0.5px solid #e4e4e4"></div><div class="a" style="left:504.5px;top:188.6px;width:5.8px;height:6.2px;background:#fafafa"></div>
<div class="a" style="left:171px;top:190px;width:326px;height:3.4px;background:linear-gradient(#dadada,#c6c6c6,#d6d6d6);border:0.4px solid #bdbdbd;border-radius:1.2px"></div>
<div class="t" style="left:166px;top:189.5px;font-size:3px;color:#444">&#9666;</div>
<div class="t" style="left:500px;top:189.8px;font-size:3px;color:#444">&#9656;</div>

<div class="a" style="left:215.2px;top:148.5px;width:240.3px;height:29.3px;background:#7f89bc;border:1px solid #4a7ac6;border-radius:2.5px"></div>
<svg class="a" style="left:0;top:0" width="680" height="415" viewBox="0 0 680 415">
  <line x1="272" y1="163.6" x2="312.5" y2="163.6" stroke="#5fb35a" stroke-width="0.8"/>
  <line x1="357" y1="163.6" x2="393" y2="163.6" stroke="#5fb35a" stroke-width="0.8"/>
  <circle cx="272.5" cy="163.6" r="0.9" fill="#e8f070"/>
  <circle cx="312.5" cy="163.6" r="0.9" fill="#5fd35a"/>
  <circle cx="357" cy="163.6" r="0.9" fill="#e8f070"/>
  <circle cx="393" cy="163.6" r="0.9" fill="#5fd35a"/>
</svg>
<div class="a" style="left:240.3px;top:156.6px;width:31.6px;height:13.2px;background:rgba(170,165,110,0.35)"></div>
<div class="t" style="left:241.3px;top:157.0px;font-size:13.6px;font-weight:bold;color:#8fd0ee;-webkit-text-stroke:1.3px #8fd0ee;transform:scaleX(0.9);transform-origin:0 0">PLAY</div>
<div class="t" style="left:241.3px;top:157.0px;font-size:13.6px;font-weight:bold;color:#1c72b6;transform:scaleX(0.9);transform-origin:0 0">PLAY</div>
<div class="t" style="left:314.4px;top:157.0px;font-size:13.6px;font-weight:bold;color:#8fd0ee;-webkit-text-stroke:1.3px #8fd0ee;transform:scaleX(0.86);transform-origin:0 0">AUDIO</div>
<div class="t" style="left:314.4px;top:157.0px;font-size:13.6px;font-weight:bold;color:#1c72b6;transform:scaleX(0.86);transform-origin:0 0">AUDIO</div>
<div class="t" style="left:395.3px;top:157.0px;font-size:13.6px;font-weight:bold;color:#8fd0ee;-webkit-text-stroke:1.3px #8fd0ee;transform:scaleX(0.76);transform-origin:0 0">SCENES</div>
<div class="t" style="left:395.3px;top:157.0px;font-size:13.6px;font-weight:bold;color:#1c72b6;transform:scaleX(0.76);transform-origin:0 0">SCENES</div>


<!-- ===== Action matrix ===== -->
<div class="ptitle" style="left:164px;top:196.5px;width:346px;background:#f0f0f0"><span>Action matrix</span><i style="left:32px;width:305px"></i><b class="pin" style="left:340.5px"></b></div>
<div class="frame" style="left:164.5px;top:204.3px;width:345.2px;height:120px;background:#f0f0f0"></div>
<div class="a" style="left:165px;top:217.6px;width:344.5px;height:0.6px;background:#dcdcdc"></div>
<div class="a" style="left:500px;top:207.5px;width:6.5px;height:7px;background:linear-gradient(135deg,#e0c050,#8a6a20);border:0.4px solid #6a5020"></div>
<div class="a" style="left:213.5px;top:218.6px;width:60px;height:10.4px;background:#f4f4f4"></div><div class="a" style="left:274px;top:218.6px;width:0.5px;height:10.4px;background:#d8d8d8"></div><div class="a" style="left:326px;top:218.6px;width:182px;height:10.4px;background:#f4f4f4"></div>
<div class="t" style="left:167px;top:221.5px;font-size:4px;color:#444">Enter action 1:</div>
<div class="t" style="left:275.5px;top:221.5px;font-size:4px;color:#444">Enter animation 1:</div>
<div class="a" style="left:168.3px;top:207px;width:4.5px;height:4.5px;background:#8a4aa0"></div>
<div class="a" style="left:171.5px;top:210.5px;width:4.5px;height:4.5px;background:#5a8a3a"></div>
<div class="a" style="left:179.5px;top:206.5px;width:6.6px;height:8.8px;background:linear-gradient(90deg,#6aa0d8,#c8c090 50%,#8a8a6a);border-radius:1.5px"></div>
<div class="t" style="left:189.6px;top:204.2px;font-size:11px;font-weight:bold;color:#d23a2e">&#215;</div>
<div class="a" style="left:166.5px;top:229.5px;width:342.7px;height:94px;background:#f0f0f0;border:0.5px solid #d4d4d4"></div>
<div class="a" style="left:167px;top:230px;width:341.6px;height:7.3px;background:#fdfdfd;border-bottom:0.4px solid #e4e4e4"></div>
<div class="t" style="left:175.00px;width:30px;text-align:center;top:231.7px;font-size:4.2px;color:#555">Button</div>
<div class="t" style="left:236.50px;width:30px;text-align:center;top:231.7px;font-size:4.2px;color:#555">Left</div>
<div class="t" style="left:297.75px;width:30px;text-align:center;top:231.7px;font-size:4.2px;color:#555">Right</div>
<div class="t" style="left:345.25px;width:30px;text-align:center;top:231.7px;font-size:4.2px;color:#555">Up</div>
<div class="t" style="left:393.25px;width:30px;text-align:center;top:231.7px;font-size:4.2px;color:#555">Down</div>
<div class="t" style="left:451.90px;width:30px;text-align:center;top:231.7px;font-size:4.2px;color:#555">Enter</div>
<div class="a" style="left:167px;top:237.40px;width:46.50px;height:10.95px;background:#f5f5f5;border-bottom:0.4px solid #ececec"></div>
<div class="a" style="left:213.50px;top:237.40px;width:218.50px;height:10.95px;background:#eaf3fc;border-bottom:0.4px solid #eeeeee"></div>
<div class="a" style="left:432.00px;top:237.40px;width:69.80px;height:10.95px;background:#f3eefb;border-bottom:0.4px solid #eeeeee"></div>
<div class="a" style="left:501.80px;top:237.40px;width:6.80px;height:10.95px;background:#ecfbf2;border-bottom:0.4px solid #eeeeee"></div>
<div class="a" style="left:167px;top:248.35px;width:46.50px;height:10.95px;background:#f5f5f5;border-bottom:0.4px solid #ececec"></div>
<div class="a" style="left:213.50px;top:248.35px;width:218.50px;height:10.95px;background:#fff;border-bottom:0.4px solid #eeeeee"></div>
<div class="a" style="left:432.00px;top:248.35px;width:69.80px;height:10.95px;background:#fff;border-bottom:0.4px solid #eeeeee"></div>
<div class="a" style="left:501.80px;top:248.35px;width:6.80px;height:10.95px;background:#ecfbf2;border-bottom:0.4px solid #eeeeee"></div>
<div class="a" style="left:167px;top:259.30px;width:46.50px;height:10.95px;background:#f5f5f5;border-bottom:0.4px solid #ececec"></div>
<div class="a" style="left:213.50px;top:259.30px;width:218.50px;height:10.95px;background:#eaf3fc;border-bottom:0.4px solid #eeeeee"></div>
<div class="a" style="left:432.00px;top:259.30px;width:69.80px;height:10.95px;background:#f3eefb;border-bottom:0.4px solid #eeeeee"></div>
<div class="a" style="left:501.80px;top:259.30px;width:6.80px;height:10.95px;background:#ecfbf2;border-bottom:0.4px solid #eeeeee"></div>
<div class="a" style="left:167px;top:270.25px;width:46.50px;height:10.95px;background:#f5f5f5;border-bottom:0.4px solid #ececec"></div>
<div class="a" style="left:213.50px;top:270.25px;width:218.50px;height:10.95px;background:#fff;border-bottom:0.4px solid #eeeeee"></div>
<div class="a" style="left:432.00px;top:270.25px;width:69.80px;height:10.95px;background:#fff;border-bottom:0.4px solid #eeeeee"></div>
<div class="a" style="left:501.80px;top:270.25px;width:6.80px;height:10.95px;background:#ecfbf2;border-bottom:0.4px solid #eeeeee"></div>
<div class="a" style="left:167px;top:281.20px;width:46.50px;height:10.95px;background:#f5f5f5;border-bottom:0.4px solid #ececec"></div>
<div class="a" style="left:213.50px;top:281.20px;width:218.50px;height:10.95px;background:#eaf3fc;border-bottom:0.4px solid #eeeeee"></div>
<div class="a" style="left:432.00px;top:281.20px;width:69.80px;height:10.95px;background:#f3eefb;border-bottom:0.4px solid #eeeeee"></div>
<div class="a" style="left:501.80px;top:281.20px;width:6.80px;height:10.95px;background:#ecfbf2;border-bottom:0.4px solid #eeeeee"></div>
<div class="a" style="left:167px;top:292.15px;width:46.50px;height:10.95px;background:#f5f5f5;border-bottom:0.4px solid #ececec"></div>
<div class="a" style="left:213.50px;top:292.15px;width:218.50px;height:10.95px;background:#fff;border-bottom:0.4px solid #eeeeee"></div>
<div class="a" style="left:432.00px;top:292.15px;width:69.80px;height:10.95px;background:#fff;border-bottom:0.4px solid #eeeeee"></div>
<div class="a" style="left:501.80px;top:292.15px;width:6.80px;height:10.95px;background:#ecfbf2;border-bottom:0.4px solid #eeeeee"></div>
<div class="a" style="left:213.50px;top:230px;width:0.4px;height:90px;background:#e9e9e9"></div>
<div class="a" style="left:289.50px;top:230px;width:0.4px;height:90px;background:#e9e9e9"></div>
<div class="a" style="left:336.00px;top:230px;width:0.4px;height:90px;background:#e9e9e9"></div>
<div class="a" style="left:384.50px;top:230px;width:0.4px;height:90px;background:#e9e9e9"></div>
<div class="a" style="left:432.00px;top:230px;width:0.4px;height:90px;background:#e9e9e9"></div>
<div class="a" style="left:501.80px;top:230px;width:0.4px;height:90px;background:#e9e9e9"></div>
<div class="a" style="left:167px;top:303.10px;width:341.6px;height:16.50px;background:#f0f0f0"></div>
<div class="a" style="left:213.50px;top:303.10px;width:0.4px;height:16.50px;background:#e8e8e8"></div>
<div class="a" style="left:289.50px;top:303.10px;width:0.4px;height:16.50px;background:#e8e8e8"></div>
<div class="a" style="left:336.00px;top:303.10px;width:0.4px;height:16.50px;background:#e8e8e8"></div>
<div class="a" style="left:384.50px;top:303.10px;width:0.4px;height:16.50px;background:#e8e8e8"></div>
<div class="a" style="left:432.00px;top:303.10px;width:0.4px;height:16.50px;background:#e8e8e8"></div>
<div class="a" style="left:501.80px;top:303.10px;width:0.4px;height:16.50px;background:#e8e8e8"></div>
<div class="a" style="left:167px;top:319.6px;width:341.6px;height:4px;background:#f0f0f0;border-top:0.4px solid #e0e0e0"></div>
<div class="a" style="left:172.5px;top:320.3px;width:303px;height:2.6px;background:linear-gradient(#e6e6e6,#d4d4d4);border:0.4px solid #c4c4c4;border-radius:1px"></div>
<div class="t" style="left:167.4px;top:320px;font-size:2.8px;color:#444">&#9666;</div>
<div class="t" style="left:504.5px;top:320px;font-size:2.8px;color:#444">&#9656;</div>
<div class="t" style="left:167.3px;top:241.0px;font-size:3.9px;color:#222;font-weight:bold;color:#111">Play</div>
<div class="t" style="left:167.3px;top:262.9px;font-size:3.9px;color:#222;font-weight:bold;color:#111">Sound</div>
<div class="t" style="left:167.3px;top:284.8px;font-size:3.9px;color:#222;font-weight:bold;color:#111">Scenes</div>
<div class="t" style="left:290.3px;top:241.0px;font-size:3.9px;color:#222;">Button: Sound</div>
<div class="t" style="left:433px;top:241.0px;font-size:3.9px;color:#222;">Movie: Movie [1]</div>
<div class="t" style="left:433px;top:252.0px;font-size:3.9px;color:#222;">Fade out (linear) - All &lt;&gt; [1/2]</div>
<div class="t" style="left:215px;top:262.9px;font-size:3.9px;color:#222;">Button: Play</div>
<div class="t" style="left:290.3px;top:262.9px;font-size:3.9px;color:#222;">Button: Scenes</div>
<div class="t" style="left:337px;top:260.5px;font-size:3.9px;color:#222;">Menu: Main Sound</div>
<div class="t" style="left:337px;top:265.1px;font-size:3.9px;color:#222;">[SndOrg] [anm/act 1]</div>
<div class="t" style="left:433px;top:260.5px;font-size:3.9px;color:#222;">Menu: Main Sound [SndMusic] [anm/act</div>
<div class="t" style="left:433px;top:265.1px;font-size:3.9px;color:#222;">1]</div>
<div class="t" style="left:215px;top:284.8px;font-size:3.9px;color:#222;">Button: Sound</div>
<div class="t" style="left:337px;top:282.4px;font-size:3.9px;color:#222;">Menu: Main Scenes</div>
<div class="t" style="left:337px;top:287.0px;font-size:3.9px;color:#222;">[anm/act 1]</div>
<div class="t" style="left:433px;top:284.8px;font-size:3.9px;color:#222;">Menu: Main Scenes [anm/act 1]</div>

<!-- ===== Library ===== -->
<div class="ptitle" style="left:164px;top:327.5px;width:317px;background:#f0f0f0"><span>Library</span><i style="left:20px;width:290px"></i><b class="pin" style="left:312px"></b></div>
<div class="frame" style="left:164.6px;top:335.3px;width:315.6px;height:77px;background:#f0f0f0;border-color:#e2e2e2 #d0d0d0 #d0d0d0 #d0d0d0"></div>
<div class="t" style="left:374.5px;top:338px;font-size:3.9px;color:#222">View</div>
<div class="a" style="left:384.5px;top:336.6px;width:29.8px;height:6.8px;background:#fff;border:0.5px solid #b8b8b8"></div>
<div class="t" style="left:385.8px;top:338.2px;font-size:3.9px;color:#222">Thumbnails</div>
<div class="a" style="left:410px;top:337.3px;width:4px;height:5.6px;background:linear-gradient(#9a9a9a,#6a6a6a);border:0.4px solid #555"></div>
<div class="t" style="left:410.7px;top:338.6px;font-size:2.6px;color:#fff">&#9660;</div>
<div class="t" style="left:416.8px;top:338px;font-size:3.9px;color:#222">Filter:</div>
<div class="a" style="left:426.3px;top:336.6px;width:51px;height:6.8px;background:#fff;border:0.5px solid #b8b8b8"></div>
<div class="t" style="left:427.6px;top:338.2px;font-size:3.9px;color:#222">All supported</div>
<div class="a" style="left:473px;top:337.3px;width:4px;height:5.6px;background:linear-gradient(#9a9a9a,#6a6a6a);border:0.4px solid #555"></div>
<div class="t" style="left:473.7px;top:338.6px;font-size:2.6px;color:#fff">&#9660;</div>
<div class="a" style="left:166px;top:344.2px;width:76.5px;height:67.6px;background:#fff;border:0.5px solid #c8c8c8"></div>
<div class="a" style="left:173.5px;top:345px;width:0.4px;height:60px;background:#e2e2e2"></div>
<div class="a" style="left:180.5px;top:345px;width:0.4px;height:60px;background:#e2e2e2"></div>
<div class="a" style="left:187.5px;top:345px;width:0.4px;height:60px;background:#e2e2e2"></div>
<div class="a" style="left:190px;top:345px;width:0;height:60px;border-left:0.5px dotted #b0b0b0"></div>
<div class="a" style="left:190.3px;top:349.10px;width:2.5px;height:0;border-top:0.5px dotted #b0b0b0"></div>
<div class="a" style="left:193.8px;top:347.10px;width:4.4px;height:3.8px;background:linear-gradient(#fce38a,#f0b92e);border-radius:0.5px"></div>
<div class="t" style="left:200.6px;top:347.20px;font-size:3.7px;color:#333">__MAIN</div>
<div class="a" style="left:190.3px;top:354.80px;width:2.5px;height:0;border-top:0.5px dotted #b0b0b0"></div>
<div class="a" style="left:193.8px;top:352.80px;width:4.4px;height:3.8px;background:linear-gradient(#fce38a,#f0b92e);border-radius:0.5px"></div>
<div class="t" style="left:200.6px;top:352.90px;font-size:3.7px;color:#333">__SCRIPTS</div>
<div class="a" style="left:190.3px;top:360.50px;width:2.5px;height:0;border-top:0.5px dotted #b0b0b0"></div>
<div class="a" style="left:193.8px;top:358.50px;width:4.4px;height:3.8px;background:linear-gradient(#fce38a,#f0b92e);border-radius:0.5px"></div>
<div class="t" style="left:200.6px;top:358.60px;font-size:3.7px;color:#333">ChaptersImages</div>
<div class="a" style="left:190.3px;top:366.20px;width:2.5px;height:0;border-top:0.5px dotted #b0b0b0"></div>
<div class="a" style="left:193.8px;top:364.20px;width:4.4px;height:3.8px;background:linear-gradient(#fce38a,#f0b92e);border-radius:0.5px"></div>
<div class="t" style="left:200.6px;top:364.30px;font-size:3.7px;color:#333">Main Menu Raw</div>
<div class="a" style="left:190.3px;top:371.90px;width:2.5px;height:0;border-top:0.5px dotted #b0b0b0"></div>
<div class="a" style="left:193.8px;top:369.90px;width:4.4px;height:3.8px;background:linear-gradient(#fce38a,#f0b92e);border-radius:0.5px"></div>
<div class="t" style="left:200.6px;top:370.00px;font-size:3.7px;color:#333">Main Menu v2</div>
<div class="a" style="left:199.8px;top:375.10px;width:11px;height:5px;background:#e8e8e8"></div>
<div class="a" style="left:190.3px;top:377.60px;width:2.5px;height:0;border-top:0.5px dotted #b0b0b0"></div>
<div class="a" style="left:193.8px;top:375.60px;width:4.4px;height:3.8px;background:linear-gradient(#fce38a,#f0b92e);border-radius:0.5px"></div>
<div class="t" style="left:200.6px;top:375.70px;font-size:3.7px;color:#111">Menu</div>
<div class="a" style="left:190.3px;top:383.30px;width:2.5px;height:0;border-top:0.5px dotted #b0b0b0"></div>
<div class="a" style="left:193.8px;top:381.30px;width:4.4px;height:3.8px;background:linear-gradient(#fce38a,#f0b92e);border-radius:0.5px"></div>
<div class="t" style="left:200.6px;top:381.40px;font-size:3.7px;color:#333">menuNew</div>
<div class="a" style="left:190.3px;top:389.00px;width:2.5px;height:0;border-top:0.5px dotted #b0b0b0"></div>
<div class="a" style="left:193.8px;top:387.00px;width:4.4px;height:3.8px;background:linear-gradient(#fce38a,#f0b92e);border-radius:0.5px"></div>
<div class="t" style="left:200.6px;top:387.10px;font-size:3.7px;color:#333">menuNew_modified</div>
<div class="a" style="left:190.3px;top:394.70px;width:2.5px;height:0;border-top:0.5px dotted #b0b0b0"></div>
<div class="a" style="left:193.8px;top:392.70px;width:4.4px;height:3.8px;background:linear-gradient(#fce38a,#f0b92e);border-radius:0.5px"></div>
<div class="t" style="left:200.6px;top:392.80px;font-size:3.7px;color:#333">Movie</div>
<div class="a" style="left:190.3px;top:400.40px;width:2.5px;height:0;border-top:0.5px dotted #b0b0b0"></div>
<div class="a" style="left:193.8px;top:398.40px;width:4.4px;height:3.8px;background:linear-gradient(#fce38a,#f0b92e);border-radius:0.5px"></div>
<div class="t" style="left:200.6px;top:398.50px;font-size:3.7px;color:#333">Popup</div>
<div class="a" style="left:190.3px;top:406.10px;width:2.5px;height:0;border-top:0.5px dotted #b0b0b0"></div>
<div class="a" style="left:193.8px;top:404.10px;width:4.4px;height:3.8px;background:linear-gradient(#fce38a,#f0b92e);border-radius:0.5px"></div>
<div class="t" style="left:200.6px;top:404.20px;font-size:3.7px;color:#333">PSD SCN</div>
<div class="a" style="left:236.7px;top:344.7px;width:5.3px;height:62px;background:#f0f0f0"></div>
<div class="a" style="left:237.4px;top:363.5px;width:3.8px;height:10px;background:linear-gradient(90deg,#e4e4e4,#cdcdcd,#e4e4e4);border:0.4px solid #b8b8b8;border-radius:1px"></div>
<div class="t" style="left:237.8px;top:345px;font-size:2.8px;color:#333">&#9652;</div>
<div class="t" style="left:237.8px;top:402px;font-size:2.8px;color:#333">&#9662;</div>
<div class="a" style="left:166.5px;top:406.5px;width:76px;height:5px;background:#f0f0f0"></div>
<div class="a" style="left:171px;top:407.3px;width:30px;height:3.4px;background:linear-gradient(#e4e4e4,#cdcdcd);border:0.4px solid #b8b8b8;border-radius:1px"></div>
<div class="t" style="left:166.8px;top:407.3px;font-size:2.8px;color:#333">&#9666;</div>
<div class="t" style="left:233.5px;top:407.3px;font-size:2.8px;color:#333">&#9656;</div>
<div class="a" style="left:243.3px;top:344.2px;width:235.4px;height:67.8px;background:#fff;border:0.5px solid #c8c8c8"></div>
<div class="a" style="left:244px;top:344.5px;width:0.9px;height:67.2px;background:#9fb3d3"></div>
<div class="a" style="left:473.6px;top:344.7px;width:4.8px;height:66.8px;background:#f0f0f0"></div>
<div class="a" style="left:474.3px;top:350.5px;width:3.4px;height:25.5px;background:linear-gradient(90deg,#e4e4e4,#cdcdcd,#e4e4e4);border:0.4px solid #b8b8b8;border-radius:1px"></div>
<div class="t" style="left:474.5px;top:345.3px;font-size:2.8px;color:#333">&#9652;</div>
<div class="t" style="left:474.5px;top:406.5px;font-size:2.8px;color:#333">&#9662;</div>
<div class="t" style="left:253px;top:349.3px;font-size:13.6px;font-weight:bold;color:#1f78bd;letter-spacing:-0.2px">PLAY</div>
<div class="t" style="left:303.5px;top:349.3px;font-size:13.6px;font-weight:bold;color:#f4f8fc;-webkit-text-stroke:0.95px #1f5090;letter-spacing:-0.2px">PLAY</div>
<div class="t" style="left:354.4px;top:349.3px;font-size:13.6px;font-weight:bold;color:#1f78bd;transform:scaleX(0.655);transform-origin:0 0">SCENES</div>
<div class="t" style="left:404.9px;top:349.3px;font-size:13.6px;font-weight:bold;color:#a8c2e4;-webkit-text-stroke:0.75px #24558f;transform:scaleX(0.655);transform-origin:0 0">SCENES</div>
<div class="t" style="left:304px;top:386.6px;font-size:12.6px;font-weight:bold;color:#1f78bd;letter-spacing:-0.2px">Music</div>
<div class="t" style="left:354.2px;top:386.6px;font-size:12.6px;font-weight:bold;color:#a8c2e4;-webkit-text-stroke:0.75px #24558f;letter-spacing:-0.2px">Music</div>
<div class="a" style="left:260.5px;top:382.3px;width:20.3px;height:20.5px;background:#0d3450"></div>
<svg class="a" style="left:260.5px;top:382.3px" width="20.3" height="20.5" viewBox="0 0 20 20"><path d="M3 10 L8 15.5 L17.5 3.5" stroke="#1f9bf0" stroke-width="3.2" fill="none" stroke-linejoin="miter"/></svg>
<div class="a" style="left:412.3px;top:382.3px;width:20.3px;height:20.5px;background:#0d3450"></div>
<svg class="a" style="left:412.3px;top:382.3px" width="20.3" height="20.5" viewBox="0 0 20 20"><path d="M3 10 L8 15.5 L17.5 3.5" stroke="#1f9bf0" stroke-width="3.2" fill="none" stroke-linejoin="miter"/></svg>
<div class="t" style="left:250.70px;width:40px;text-align:center;top:369.20px;font-size:4.05px;color:#2a2a2a">btnPlayN.png</div>
<div class="t" style="left:300.50px;width:40px;text-align:center;top:369.20px;font-size:4.05px;color:#2a2a2a">btnPlayS.png</div>
<div class="t" style="left:352.00px;width:40px;text-align:center;top:369.20px;font-size:4.05px;color:#2a2a2a">btnScenesN.png</div>
<div class="t" style="left:403.00px;width:40px;text-align:center;top:369.20px;font-size:4.05px;color:#2a2a2a">btnScenesS.png</div>
<div class="t" style="left:250.70px;width:40px;text-align:center;top:405.10px;font-size:4.05px;color:#2a2a2a">btnSndMusicC.png</div>
<div class="t" style="left:301.50px;width:40px;text-align:center;top:405.10px;font-size:4.05px;color:#2a2a2a">btnSndMusicN.png</div>
<div class="t" style="left:352.00px;width:40px;text-align:center;top:405.10px;font-size:4.05px;color:#2a2a2a">btnSndMusicS.png</div>
<div class="t" style="left:402.60px;width:40px;text-align:center;top:405.10px;font-size:4.05px;color:#2a2a2a">btnSndOrgC.png</div>

<!-- ===== Structure ===== -->
<div class="ptitle" style="left:511px;top:30px;width:169px"><span>Structure</span><i style="left:26px;width:135px"></i><b class="pin" style="left:163px"></b></div>
<div class="a" style="left:510.8px;top:38.2px;width:167.6px;height:287.2px;background:#fff;border:0.5px solid #e2e2e2"></div>
<svg class="a" style="left:0;top:0" width="680" height="415" viewBox="0 0 680 415">
<line x1="517" y1="57.3" x2="525.5" y2="57.3" stroke="#e070d8" stroke-width="0.8"/>
<path d="M523.5 55.6 L526 57.3 L523.5 59" fill="#c030b0"/>
<line x1="551.6" y1="57.5" x2="562.5" y2="57.5" stroke="#c8d0c8" stroke-width="0.5"/>
<line x1="588" y1="55.8" x2="598.5" y2="55.8" stroke="#333" stroke-width="0.6"/>
<line x1="588" y1="59.2" x2="598.5" y2="59.2" stroke="#333" stroke-width="0.6"/>
<line x1="624.5" y1="55.8" x2="634.5" y2="55.8" stroke="#333" stroke-width="0.6"/>
<line x1="624.5" y1="59.2" x2="634.5" y2="59.2" stroke="#333" stroke-width="0.6"/>
<path d="M589 54.6 L587.8 55.8 L589 57" fill="#222"/><path d="M597.5 58 L598.7 59.2 L597.5 60.4" fill="#222"/>
<path d="M625.5 54.6 L624.3 55.8 L625.5 57" fill="#222"/><path d="M633.5 58 L634.7 59.2 L633.5 60.4" fill="#222"/>
<line x1="539.7" y1="92" x2="539.7" y2="70.5" stroke="#5060c0" stroke-width="0.6"/>
<path d="M538.6 72 L539.7 70.3 L540.8 72" fill="#3040a0"/>
<line x1="552.8" y1="92.2" x2="565.5" y2="70.5" stroke="#444" stroke-width="0.5"/>
<line x1="552.8" y1="92.2" x2="636.5" y2="70.5" stroke="#444" stroke-width="0.5"/>
<line x1="551.8" y1="70.5" x2="566" y2="185.3" stroke="#333" stroke-width="0.5"/>
<line x1="555" y1="72" x2="562.3" y2="92" stroke="#aab" stroke-width="0.4"/>
<circle cx="552.8" cy="92.2" r="0.8" fill="#222"/>
<circle cx="551.9" cy="70.2" r="0.7" fill="#222"/>
<line x1="552" y1="117.3" x2="637" y2="185.3" stroke="#333" stroke-width="0.5"/>
<circle cx="552" cy="117.3" r="0.7" fill="#222"/>
<line x1="539.2" y1="117.8" x2="539.2" y2="185.3" stroke="#f06a6a" stroke-width="0.7"/>
<path d="M538.1 183.5 L539.2 185.3 L540.3 183.5" fill="#e03030"/>
<line x1="551.6" y1="198" x2="562.5" y2="198" stroke="#c8d0c8" stroke-width="0.5"/>
<line x1="588" y1="196.5" x2="598.5" y2="196.5" stroke="#333" stroke-width="0.6"/>
<line x1="588" y1="199.5" x2="598.5" y2="199.5" stroke="#333" stroke-width="0.6"/>
<path d="M589 195.3 L587.8 196.5 L589 197.7" fill="#222"/>
<line x1="624.5" y1="198" x2="634.5" y2="198" stroke="#333" stroke-width="0.6"/>
</svg>
<svg class="a" style="left:525.8px;top:45px" width="26" height="25.6" viewBox="0 0 26 25.6"><rect x="0.3" y="0.3" width="25.4" height="25" fill="#fbfbfc" stroke="#8a8ac0" stroke-width="0.55" stroke-dasharray="0.9 1.1"/></svg>
<svg class="a" style="left:525.8px;top:45px" width="26" height="22" viewBox="0 0 26 22"><defs><linearGradient id="g525" x1="0" y1="0" x2="1" y2="1"><stop offset="0" stop-color="#f6fbff"/><stop offset="0.6" stop-color="#cfe6f8"/><stop offset="1" stop-color="#9fcbef"/></linearGradient></defs><g transform="rotate(-24 12.8 10.6)"><rect x="5.6" y="3.6" width="14.4" height="14" rx="1.3" fill="url(#g525)" stroke="#c98836" stroke-width="1.7"/><rect x="4.5" y="2.5" width="16.6" height="16.2" rx="1.8" fill="none" stroke="#a66a24" stroke-width="0.35" opacity="0.7"/><path d="M5.2 4.5 L19.8 4.5" stroke="#ecc07a" stroke-width="0.6"/></g></svg>
<div class="t" style="left:515.8px;width:46px;text-align:center;top:66.6px;font-size:3.75px;color:#222">Main ent anim</div>
<svg class="a" style="left:562.4px;top:45px" width="26" height="25.6" viewBox="0 0 26 25.6"><rect x="0.3" y="0.3" width="25.4" height="25" fill="#fbfbfc" stroke="#8a8ac0" stroke-width="0.55" stroke-dasharray="0.9 1.1"/></svg>
<svg class="a" style="left:562.4px;top:45px" width="26" height="22" viewBox="0 0 26 22"><defs><linearGradient id="g562" x1="0" y1="0" x2="1" y2="1"><stop offset="0" stop-color="#f6fbff"/><stop offset="0.6" stop-color="#cfe6f8"/><stop offset="1" stop-color="#9fcbef"/></linearGradient></defs><g transform="rotate(-24 12.8 10.6)"><rect x="5.6" y="3.6" width="14.4" height="14" rx="1.3" fill="url(#g562)" stroke="#c98836" stroke-width="1.7"/><rect x="4.5" y="2.5" width="16.6" height="16.2" rx="1.8" fill="none" stroke="#a66a24" stroke-width="0.35" opacity="0.7"/><path d="M5.2 4.5 L19.8 4.5" stroke="#ecc07a" stroke-width="0.6"/></g></svg>
<div class="t" style="left:552.4px;width:46px;text-align:center;top:66.6px;font-size:3.75px;color:#222">Main</div>
<svg class="a" style="left:598.5px;top:45px" width="26" height="25.6" viewBox="0 0 26 25.6"><rect x="0.3" y="0.3" width="25.4" height="25" fill="#fbfbfc" stroke="#8a8ac0" stroke-width="0.55" stroke-dasharray="0.9 1.1"/></svg>
<svg class="a" style="left:598.5px;top:45px" width="26" height="22" viewBox="0 0 26 22"><defs><linearGradient id="g598" x1="0" y1="0" x2="1" y2="1"><stop offset="0" stop-color="#f6fbff"/><stop offset="0.6" stop-color="#cfe6f8"/><stop offset="1" stop-color="#9fcbef"/></linearGradient></defs><g transform="rotate(-24 12.8 10.6)"><rect x="5.6" y="3.6" width="14.4" height="14" rx="1.3" fill="url(#g598)" stroke="#c98836" stroke-width="1.7"/><rect x="4.5" y="2.5" width="16.6" height="16.2" rx="1.8" fill="none" stroke="#a66a24" stroke-width="0.35" opacity="0.7"/><path d="M5.2 4.5 L19.8 4.5" stroke="#ecc07a" stroke-width="0.6"/></g></svg>
<div class="t" style="left:588.5px;width:46px;text-align:center;top:66.6px;font-size:3.75px;color:#222">Main Sound</div>
<svg class="a" style="left:634.3px;top:45px" width="26" height="25.6" viewBox="0 0 26 25.6"><rect x="0.3" y="0.3" width="25.4" height="25" fill="#fbfbfc" stroke="#8a8ac0" stroke-width="0.55" stroke-dasharray="0.9 1.1"/></svg>
<svg class="a" style="left:634.3px;top:45px" width="26" height="22" viewBox="0 0 26 22"><defs><linearGradient id="g634" x1="0" y1="0" x2="1" y2="1"><stop offset="0" stop-color="#f6fbff"/><stop offset="0.6" stop-color="#cfe6f8"/><stop offset="1" stop-color="#9fcbef"/></linearGradient></defs><g transform="rotate(-24 12.8 10.6)"><rect x="5.6" y="3.6" width="14.4" height="14" rx="1.3" fill="url(#g634)" stroke="#c98836" stroke-width="1.7"/><rect x="4.5" y="2.5" width="16.6" height="16.2" rx="1.8" fill="none" stroke="#a66a24" stroke-width="0.35" opacity="0.7"/><path d="M5.2 4.5 L19.8 4.5" stroke="#ecc07a" stroke-width="0.6"/></g></svg>
<div class="t" style="left:624.3px;width:46px;text-align:center;top:66.6px;font-size:3.75px;color:#222">Main Scenes</div>
<svg class="a" style="left:525.8px;top:92px" width="26" height="25.6" viewBox="0 0 26 25.6"><rect x="0.3" y="0.3" width="25.4" height="25" fill="#fbfbfc" stroke="#8a8ac0" stroke-width="0.55" stroke-dasharray="0.9 1.1"/></svg>
<svg class="a" style="left:529.6999999999999px;top:93.4px" width="18" height="18" viewBox="0 0 16 16"><path d="M1.5 7.2 L14.5 7.2 L14.5 14.6 L1.5 14.6 Z" fill="#2a303c"/><path d="M1.5 7.2 L14.5 7.2 L14.5 9 L1.5 9 Z" fill="#4a5262"/><path d="M1.2 6.8 L13.3 2 L14.4 4.7 L2.3 9.5 Z" fill="#343a48"/><path d="M3.4 6 L5.6 3.4 M6.9 4.6 L9.1 2.1 M10.4 3.3 L12.3 1.1" stroke="#eef1f6" stroke-width="1.3"/><path d="M3.5 14.4 L6 7.4 M7.5 14.4 L10 7.4 M11.5 14.4 L14 7.4" stroke="#c9d0dc" stroke-width="1"/></svg>
<div class="t" style="left:515.8px;width:46px;text-align:center;top:113.6px;font-size:3.75px;color:#222">Movie</div>
<svg class="a" style="left:562.4px;top:92px" width="26" height="25.6" viewBox="0 0 26 25.6"><rect x="0.3" y="0.3" width="25.4" height="25" fill="#fbfbfc" stroke="#8a8ac0" stroke-width="0.55" stroke-dasharray="0.9 1.1"/></svg>
<svg class="a" style="left:566.3px;top:93.4px" width="18" height="18" viewBox="0 0 16 16"><path d="M1.5 7.2 L14.5 7.2 L14.5 14.6 L1.5 14.6 Z" fill="#2a303c"/><path d="M1.5 7.2 L14.5 7.2 L14.5 9 L1.5 9 Z" fill="#4a5262"/><path d="M1.2 6.8 L13.3 2 L14.4 4.7 L2.3 9.5 Z" fill="#343a48"/><path d="M3.4 6 L5.6 3.4 M6.9 4.6 L9.1 2.1 M10.4 3.3 L12.3 1.1" stroke="#eef1f6" stroke-width="1.3"/><path d="M3.5 14.4 L6 7.4 M7.5 14.4 L10 7.4 M11.5 14.4 L14 7.4" stroke="#c9d0dc" stroke-width="1"/></svg>
<div class="t" style="left:552.4px;width:46px;text-align:center;top:113.6px;font-size:3.75px;color:#222">Menu Intro</div>
<svg class="a" style="left:526.2px;top:185.4px" width="26" height="25.6" viewBox="0 0 26 25.6"><rect x="0.3" y="0.3" width="25.4" height="25" fill="#fbfbfc" stroke="#8a8ac0" stroke-width="0.55" stroke-dasharray="0.9 1.1"/></svg>
<div class="a" style="left:530.4000000000001px;top:187.8px;width:12.5px;height:15px;background:linear-gradient(90deg,#fdfdfd,#e6e6e6);border:0.5px solid #c4c4c4;border-radius:0 0 4px 4px"></div>
<div class="a" style="left:530.4000000000001px;top:187.8px;width:12.5px;height:5.2px;background:linear-gradient(#f7a848,#e8541c)"></div>
<svg class="a" style="left:536.0px;top:192.6px" width="12" height="12" viewBox="0 0 16 16"><path d="M1.5 7.2 L14.5 7.2 L14.5 14.6 L1.5 14.6 Z" fill="#2a303c"/><path d="M1.5 7.2 L14.5 7.2 L14.5 9 L1.5 9 Z" fill="#4a5262"/><path d="M1.2 6.8 L13.3 2 L14.4 4.7 L2.3 9.5 Z" fill="#343a48"/><path d="M3.4 6 L5.6 3.4 M6.9 4.6 L9.1 2.1 M10.4 3.3 L12.3 1.1" stroke="#eef1f6" stroke-width="1.3"/><path d="M3.5 14.4 L6 7.4 M7.5 14.4 L10 7.4 M11.5 14.4 L14 7.4" stroke="#c9d0dc" stroke-width="1"/></svg>
<div class="t" style="left:516.2px;width:46px;text-align:center;top:207.9px;font-size:3.75px;color:#222">Popup ent anim</div>
<svg class="a" style="left:562.4px;top:185.4px" width="26" height="25.6" viewBox="0 0 26 25.6"><rect x="0.3" y="0.3" width="25.4" height="25" fill="#fbfbfc" stroke="#8a8ac0" stroke-width="0.55" stroke-dasharray="0.9 1.1"/></svg>
<div class="a" style="left:566.6px;top:187.8px;width:12.5px;height:15px;background:linear-gradient(90deg,#fdfdfd,#e6e6e6);border:0.5px solid #c4c4c4;border-radius:0 0 4px 4px"></div>
<div class="a" style="left:566.6px;top:187.8px;width:12.5px;height:5.2px;background:linear-gradient(#f7a848,#e8541c)"></div>
<svg class="a" style="left:572.1999999999999px;top:192.6px" width="12" height="12" viewBox="0 0 16 16"><path d="M1.5 7.2 L14.5 7.2 L14.5 14.6 L1.5 14.6 Z" fill="#2a303c"/><path d="M1.5 7.2 L14.5 7.2 L14.5 9 L1.5 9 Z" fill="#4a5262"/><path d="M1.2 6.8 L13.3 2 L14.4 4.7 L2.3 9.5 Z" fill="#343a48"/><path d="M3.4 6 L5.6 3.4 M6.9 4.6 L9.1 2.1 M10.4 3.3 L12.3 1.1" stroke="#eef1f6" stroke-width="1.3"/><path d="M3.5 14.4 L6 7.4 M7.5 14.4 L10 7.4 M11.5 14.4 L14 7.4" stroke="#c9d0dc" stroke-width="1"/></svg>
<div class="t" style="left:552.4px;width:46px;text-align:center;top:207.9px;font-size:3.75px;color:#222">Popup</div>
<svg class="a" style="left:598.4px;top:185.4px" width="26" height="25.6" viewBox="0 0 26 25.6"><rect x="0.3" y="0.3" width="25.4" height="25" fill="#fbfbfc" stroke="#8a8ac0" stroke-width="0.55" stroke-dasharray="0.9 1.1"/></svg>
<div class="a" style="left:602.6px;top:187.8px;width:12.5px;height:15px;background:linear-gradient(90deg,#fdfdfd,#e6e6e6);border:0.5px solid #c4c4c4;border-radius:0 0 4px 4px"></div>
<div class="a" style="left:602.6px;top:187.8px;width:12.5px;height:5.2px;background:linear-gradient(#f7a848,#e8541c)"></div>
<svg class="a" style="left:608.1999999999999px;top:192.6px" width="12" height="12" viewBox="0 0 16 16"><path d="M1.5 7.2 L14.5 7.2 L14.5 14.6 L1.5 14.6 Z" fill="#2a303c"/><path d="M1.5 7.2 L14.5 7.2 L14.5 9 L1.5 9 Z" fill="#4a5262"/><path d="M1.2 6.8 L13.3 2 L14.4 4.7 L2.3 9.5 Z" fill="#343a48"/><path d="M3.4 6 L5.6 3.4 M6.9 4.6 L9.1 2.1 M10.4 3.3 L12.3 1.1" stroke="#eef1f6" stroke-width="1.3"/><path d="M3.5 14.4 L6 7.4 M7.5 14.4 L10 7.4 M11.5 14.4 L14 7.4" stroke="#c9d0dc" stroke-width="1"/></svg>
<div class="t" style="left:588.4px;width:46px;text-align:center;top:207.9px;font-size:3.75px;color:#222">Popup Sound</div>
<svg class="a" style="left:634.2px;top:185.4px" width="26" height="25.6" viewBox="0 0 26 25.6"><rect x="0.3" y="0.3" width="25.4" height="25" fill="#fbfbfc" stroke="#8a8ac0" stroke-width="0.55" stroke-dasharray="0.9 1.1"/></svg>
<div class="a" style="left:638.4000000000001px;top:187.8px;width:12.5px;height:15px;background:linear-gradient(90deg,#fdfdfd,#e6e6e6);border:0.5px solid #c4c4c4;border-radius:0 0 4px 4px"></div>
<div class="a" style="left:638.4000000000001px;top:187.8px;width:12.5px;height:5.2px;background:linear-gradient(#f7a848,#e8541c)"></div>
<svg class="a" style="left:644.0px;top:192.6px" width="12" height="12" viewBox="0 0 16 16"><path d="M1.5 7.2 L14.5 7.2 L14.5 14.6 L1.5 14.6 Z" fill="#2a303c"/><path d="M1.5 7.2 L14.5 7.2 L14.5 9 L1.5 9 Z" fill="#4a5262"/><path d="M1.2 6.8 L13.3 2 L14.4 4.7 L2.3 9.5 Z" fill="#343a48"/><path d="M3.4 6 L5.6 3.4 M6.9 4.6 L9.1 2.1 M10.4 3.3 L12.3 1.1" stroke="#eef1f6" stroke-width="1.3"/><path d="M3.5 14.4 L6 7.4 M7.5 14.4 L10 7.4 M11.5 14.4 L14 7.4" stroke="#c9d0dc" stroke-width="1"/></svg>
<div class="t" style="left:624.2px;width:46px;text-align:center;top:207.9px;font-size:3.75px;color:#222">Popup Scenes</div>
<div class="t" style="left:516px;top:320.2px;font-size:3.8px;color:#333;font-style:italic">Align center</div>

<!-- ===== Output ===== -->
<div class="ptitle" style="left:481px;top:327.8px;width:199px"><span>Output</span><i style="left:20px;width:170px"></i><b class="pin" style="left:192.5px"></b></div>
<div class="a" style="left:481.3px;top:335.5px;width:196.5px;height:75px;background:#fff;border:0.5px solid #d2d2d2"></div>
<div class="a" style="left:672px;top:336px;width:5.5px;height:70px;background:#f0f0f0"></div>
<div class="a" style="left:673.3px;top:341px;width:3px;height:60px;background:#e3e3e3"></div>
<div class="a" style="left:482px;top:405.5px;width:195.5px;height:4.8px;background:#f0f0f0"></div>
<div class="t" style="left:673.6px;top:336.4px;font-size:3px;color:#555">&#9652;</div>
<div class="t" style="left:673.6px;top:400.5px;font-size:3px;color:#555">&#9662;</div>
<div class="t" style="left:668.5px;top:405.8px;font-size:3px;color:#555">&#9656;</div>

<!-- bottom status -->
<div class="a" style="left:0;top:412.6px;width:680px;height:2.4px;background:linear-gradient(#5a5a5a,#3a3a3a)"></div>


</body></html>
